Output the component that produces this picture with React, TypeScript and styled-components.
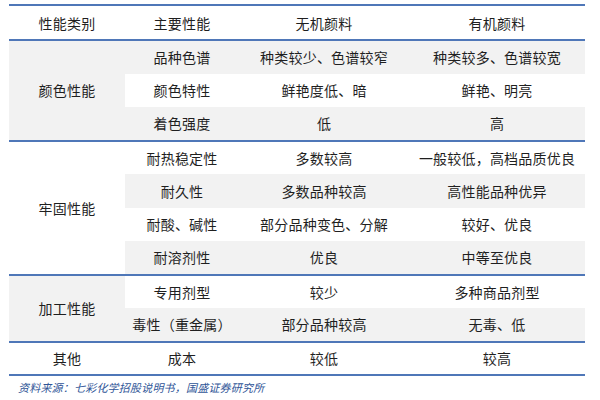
import React from "react";
import styled, { createGlobalStyle } from "styled-components";

const GlobalStyle = createGlobalStyle`
  html, body {
    margin: 0;
    padding: 0;
    background: #ffffff;
  }
  body {
    font-family: "Noto Sans CJK SC", "Noto Sans", sans-serif;
    color: #1f1f1f;
  }
`;

const Page = styled.div`
  width: 600px;
  height: 400px;
  padding: 4px 0 0 9px;
  box-sizing: border-box;
`;

const Table = styled.table`
  width: 576px;
  border-collapse: collapse;
  table-layout: fixed;
  border-top: 2px solid #4f77b8;
  border-bottom: 2px solid #4f77b8;
  font-size: 14px;
  line-height: 1;
`;

const Row = styled.tr<{ $shade?: boolean; $groupStart?: boolean }>`
  height: 33.5px;
  background: ${(p) => (p.$shade ? "#f2f2f2" : "#ffffff")};
  border-top: ${(p) => (p.$groupStart ? "2px solid #4f77b8" : "none")};
`;

const HeadRow = styled.tr`
  height: 35px;
  background: #ffffff;
`;

const Cell = styled.td<{ $shade?: boolean }>`
  padding: 0;
  text-align: center;
  vertical-align: middle;
  white-space: nowrap;
  letter-spacing: 0.2px;
  background: ${(p) => (p.$shade === undefined ? "inherit" : p.$shade ? "#f2f2f2" : "#ffffff")};
`;

const Source = styled.div`
  margin-top: 3px;
  padding-left: 9px;
  font-size: 11px;
  font-style: italic;
  color: #2f5597;
  letter-spacing: 0.2px;
`;

type Item = { name: string; a: string; b: string; shade: boolean };
type Group = { title: string; shade: boolean; items: Item[] };

const groups: Group[] = [
  {
    title: "颜色性能",
    shade: true,
    items: [
      { name: "品种色谱", a: "种类较少、色谱较窄", b: "种类较多、色谱较宽", shade: true },
      { name: "颜色特性", a: "鲜艳度低、暗", b: "鲜艳、明亮", shade: false },
      { name: "着色强度", a: "低", b: "高", shade: true },
    ],
  },
  {
    title: "牢固性能",
    shade: false,
    items: [
      { name: "耐热稳定性", a: "多数较高", b: "一般较低，高档品质优良", shade: false },
      { name: "耐久性", a: "多数品种较高", b: "高性能品种优异", shade: true },
      { name: "耐酸、碱性", a: "部分品种变色、分解", b: "较好、优良", shade: false },
      { name: "耐溶剂性", a: "优良", b: "中等至优良", shade: true },
    ],
  },
  {
    title: "加工性能",
    shade: true,
    items: [
      { name: "专用剂型", a: "较少", b: "多种商品剂型", shade: false },
      { name: "毒性（重金属）", a: "部分品种较高", b: "无毒、低", shade: true },
    ],
  },
];

export default function App() {
  return (
    <>
      <GlobalStyle />
      <Page>
        <Table>
          <colgroup>
            <col style={{ width: 116 }} />
            <col style={{ width: 114 }} />
            <col style={{ width: 170 }} />
            <col style={{ width: 176 }} />
          </colgroup>
          <tbody>
            <HeadRow>
              <Cell>性能类别</Cell>
              <Cell>主要性能</Cell>
              <Cell>无机颜料</Cell>
              <Cell>有机颜料</Cell>
            </HeadRow>
            {groups.map((g) =>
              g.items.map((it, i) => (
                <Row key={g.title + it.name} $shade={it.shade} $groupStart={i === 0}>
                  {i === 0 && (
                    <Cell rowSpan={g.items.length} $shade={g.shade}>
                      {g.title}
                    </Cell>
                  )}
                  <Cell>{it.name}</Cell>
                  <Cell>{it.a}</Cell>
                  <Cell>{it.b}</Cell>
                </Row>
              ))
            )}
            <Row $groupStart>
              <Cell>其他</Cell>
              <Cell>成本</Cell>
              <Cell>较低</Cell>
              <Cell>较高</Cell>
            </Row>
          </tbody>
        </Table>
        <Source>资料来源：七彩化学招股说明书，国盛证券研究所</Source>
      </Page>
    </>
  );
}
